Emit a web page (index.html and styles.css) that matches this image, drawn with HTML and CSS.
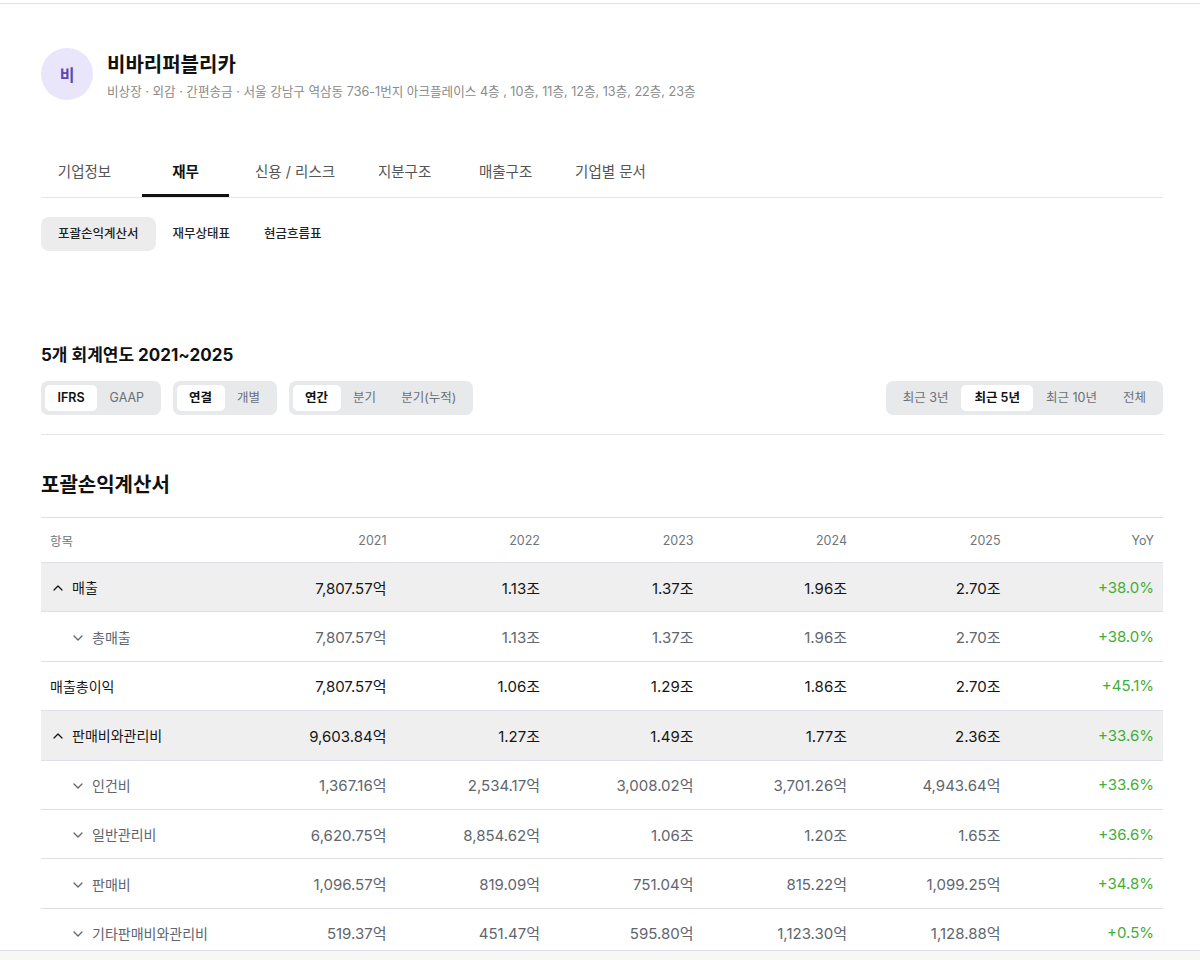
FILE: index.html
```html
<!DOCTYPE html>
<html lang="ko">
<head>
  <meta charset="UTF-8">
  <title>비바리퍼블리카 - 재무</title>
  <link rel="stylesheet" href="styles.css">
</head>
<body>
<div class="topline"></div>

<div class="page">
  <!-- 기업 헤더 -->
  <div class="company">
    <div class="avatar">비</div>
    <div class="company-info">
      <div class="company-name">비바리퍼블리카</div>
      <div class="company-meta">비상장 · 외감 · 간편송금 · 서울 강남구 역삼동 736-1번지 아크플레이스 4층 , 10층, 11층, 12층, 13층, 22층, 23층</div>
    </div>
  </div>

  <div class="tabs">
    <div class="tab">기업정보</div>
    <div class="tab active">재무</div>
    <div class="tab">신용 / 리스크</div>
    <div class="tab">지분구조</div>
    <div class="tab">매출구조</div>
    <div class="tab">기업별 문서</div>
  </div>

  <div class="subtabs">
    <div class="subtab active">포괄손익계산서</div>
    <div class="subtab">재무상태표</div>
    <div class="subtab">현금흐름표</div>
  </div>

  <div class="period-title">5개 회계연도 2021~2025</div>

  <div class="filters">
    <div class="seg">
      <div class="seg-btn active">IFRS</div>
      <div class="seg-btn">GAAP</div>
    </div>
    <div class="seg">
      <div class="seg-btn active">연결</div>
      <div class="seg-btn">개별</div>
    </div>
    <div class="seg">
      <div class="seg-btn active">연간</div>
      <div class="seg-btn">분기</div>
      <div class="seg-btn">분기(누적)</div>
    </div>
    <div class="seg seg-right">
      <div class="seg-btn">최근 3년</div>
      <div class="seg-btn active">최근 5년</div>
      <div class="seg-btn">최근 10년</div>
      <div class="seg-btn">전체</div>
    </div>
  </div>

  <hr class="divider">

  <h2 class="section-title">포괄손익계산서</h2>

  <table class="fin-table">
    <colgroup>
      <col class="col-label">
      <col><col><col><col><col><col>
    </colgroup>
    <thead>
      <tr>
        <th class="label">항목</th>
        <th>2021</th>
        <th>2022</th>
        <th>2023</th>
        <th>2024</th>
        <th>2025</th>
        <th>YoY</th>
      </tr>
    </thead>
    <tbody>
      <tr class="group">
        <td class="label"><svg class="chev" viewBox="0 0 10 6"><polyline points="1,5 5,1 9,5"/></svg>매출</td>
        <td>7,807.57억</td><td>1.13조</td><td>1.37조</td><td>1.96조</td><td>2.70조</td><td class="up">+38.0%</td>
      </tr>
      <tr class="sub">
        <td class="label"><svg class="chev" viewBox="0 0 10 6"><polyline points="1,1 5,5 9,1"/></svg>총매출</td>
        <td>7,807.57억</td><td>1.13조</td><td>1.37조</td><td>1.96조</td><td>2.70조</td><td class="up">+38.0%</td>
      </tr>
      <tr class="main">
        <td class="label">매출총이익</td>
        <td>7,807.57억</td><td>1.06조</td><td>1.29조</td><td>1.86조</td><td>2.70조</td><td class="up">+45.1%</td>
      </tr>
      <tr class="group">
        <td class="label"><svg class="chev" viewBox="0 0 10 6"><polyline points="1,5 5,1 9,5"/></svg>판매비와관리비</td>
        <td>9,603.84억</td><td>1.27조</td><td>1.49조</td><td>1.77조</td><td>2.36조</td><td class="up">+33.6%</td>
      </tr>
      <tr class="sub">
        <td class="label"><svg class="chev" viewBox="0 0 10 6"><polyline points="1,1 5,5 9,1"/></svg>인건비</td>
        <td>1,367.16억</td><td>2,534.17억</td><td>3,008.02억</td><td>3,701.26억</td><td>4,943.64억</td><td class="up">+33.6%</td>
      </tr>
      <tr class="sub">
        <td class="label"><svg class="chev" viewBox="0 0 10 6"><polyline points="1,1 5,5 9,1"/></svg>일반관리비</td>
        <td>6,620.75억</td><td>8,854.62억</td><td>1.06조</td><td>1.20조</td><td>1.65조</td><td class="up">+36.6%</td>
      </tr>
      <tr class="sub">
        <td class="label"><svg class="chev" viewBox="0 0 10 6"><polyline points="1,1 5,5 9,1"/></svg>판매비</td>
        <td>1,096.57억</td><td>819.09억</td><td>751.04억</td><td>815.22억</td><td>1,099.25억</td><td class="up">+34.8%</td>
      </tr>
      <tr class="sub">
        <td class="label"><svg class="chev" viewBox="0 0 10 6"><polyline points="1,1 5,5 9,1"/></svg>기타판매비와관리비</td>
        <td>519.37억</td><td>451.47억</td><td>595.80억</td><td>1,123.30억</td><td>1,128.88억</td><td class="up">+0.5%</td>
      </tr>
    </tbody>
  </table>
</div>

<div class="bottom-bar"></div>
</body>
</html>
```

FILE: styles.css
```css
body {
  margin: 0;
  font-family: 'Inter', 'Noto Sans CJK KR', sans-serif;
  color: #111;
  background: #fff;
}
.topline {
  height: 3px;
  border-bottom: 1px solid #dfe3e8;
}
.page {
  padding: 0 37px 40px 41px;
}

/* 기업 헤더 */
.company {
  display: flex;
  align-items: flex-start;
  gap: 14px;
  margin-top: 37px;
}
.avatar {
  width: 52px;
  height: 52px;
  margin-top: 7px;
  border-radius: 50%;
  background: #e9e5fb;
  color: #5b48b5;
  font-size: 16px;
  font-weight: 600;
  display: flex;
  align-items: center;
  justify-content: center;
  flex-shrink: 0;
}
.company-info { margin-top: 9px; }
.company-name {
  font-size: 20px;
  line-height: 30px;
  font-weight: 700;
  color: #111;
}
.company-meta {
  margin-top: 3px;
  font-size: 12.6px;
  line-height: 18px;
  color: #8a8a8a;
}

/* 메인 탭 */
.tabs {
  display: flex;
  gap: 14px;
  margin-top: 46px;
  border-bottom: 1px solid #e3e6ea;
}
.tab {
  min-width: 87px;
  box-sizing: border-box;
  padding: 0 12px;
  height: 50px;
  line-height: 50px;
  text-align: center;
  font-size: 14.5px;
  color: #555;
}
.tab.active {
  color: #111;
  font-weight: 600;
  box-shadow: inset 0 -3px 0 #111;
}

/* 서브 탭 */
.subtabs {
  display: flex;
  margin-top: 19px;
}
.subtab {
  height: 34px;
  line-height: 34px;
  padding: 0 17px;
  font-size: 12.5px;
  font-weight: 500;
  color: #222;
  border-radius: 8px;
}
.subtab.active { background: #ececec; }

.period-title {
  margin-top: 92px;
  font-size: 17px;
  line-height: 24px;
  font-weight: 700;
}

/* 필터 */
.filters {
  display: flex;
  gap: 12px;
  margin-top: 14px;
}
.seg {
  display: flex;
  padding: 4px;
  background: #e8e9eb;
  border-radius: 7px;
}
.seg-right { margin-left: auto; }
.seg-btn {
  height: 26px;
  line-height: 26px;
  padding: 0 12.5px;
  font-size: 12.5px;
  color: #6b6f76;
  border-radius: 5px;
}
.seg-right .seg-btn { padding: 0 13px; }
.seg-btn.active {
  background: #fff;
  color: #111;
  font-weight: 600;
}

.divider {
  border: none;
  border-top: 1px solid #e1e4e8;
  margin: 19px 0 0;
}

.section-title {
  margin: 35px 0 0;
  font-size: 20px;
  line-height: 30px;
  font-weight: 700;
}

/* 재무 테이블 */
.fin-table {
  width: 100%;
  margin-top: 17px;
  border-collapse: collapse;
  table-layout: fixed;
  border-top: 1px solid #dde1e7;
}
.col-label { width: 201px; }
.fin-table th, .fin-table td {
  text-align: right;
  padding: 0 9px;
  border-bottom: 1px solid #dde1e7;
  white-space: nowrap;
}
.fin-table th {
  height: 44px;
  font-size: 12.5px;
  font-weight: 400;
  color: #70757d;
}
.fin-table td {
  height: 48.4px;
  font-size: 15px;
}
.fin-table th.label { text-align: left; }
.fin-table td.label { text-align: left; font-size: 14px; }
.chev {
  width: 10px;
  height: 6px;
  margin-right: 9px;
  vertical-align: 2px;
  fill: none;
  stroke: currentColor;
  stroke-width: 1.3;
  stroke-linecap: round;
  stroke-linejoin: round;
}
.group td { background: #efefef; color: #161616; }
.group .label { padding-left: 12px; }
.main td { color: #161616; }
.sub td { color: #60656e; }
.sub .label { padding-left: 32px; }
.fin-table td.up { color: #3fae37; }

.bottom-bar {
  position: fixed;
  left: 0;
  right: 0;
  bottom: 0;
  height: 9px;
  background: #f7f7f6;
  border-top: 1px solid #dde1e7;
}
```
